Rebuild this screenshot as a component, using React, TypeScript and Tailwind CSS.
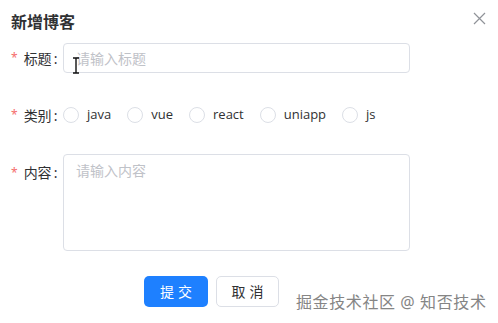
import React from 'react';

const options = ['java', 'vue', 'react', 'uniapp', 'js'];

const Label: React.FC<{ text: string }> = ({ text }) => (
  <div className="w-[52px] shrink-0 flex items-center text-[14px] text-[#303133]">
    <span className="text-[#f56c6c] text-[12px] mr-[6px]">*</span>
    <span>{text}</span>
    <span className="ml-[2px]">:</span>
  </div>
);

const App: React.FC = () => {
  return (
    <div
      className="relative w-[498px] h-[323px] bg-white overflow-hidden"
      style={{ fontFamily: '"Noto Sans", "Noto Sans CJK SC", sans-serif' }}
    >
      <div className="pl-[11px] pt-[10px] flex flex-col">
        <h1 className="text-[16px] leading-[24px] font-bold text-[#303133]">新增博客</h1>

        <div className="mt-[9px] flex items-center h-[30px]">
          <Label text="标题" />
          <div className="relative w-[347px] h-[30px] border border-[#dcdfe6] rounded-[4px] flex items-center pl-[12px] text-[14px] text-[#bfc2c8]">
            请输入标题
            <svg className="absolute left-[8px] top-[13px]" width="8" height="17" viewBox="0 0 8 17">
              <path d="M1 1h6M4 1v15M1 16h6" stroke="#111" strokeWidth="1.4" fill="none" />
            </svg>
          </div>
        </div>

        <div className="mt-[27px] flex items-center h-[30px]">
          <Label text="类别" />
          <div className="flex items-center text-[13px] text-[#303133]" style={{ fontFamily: '"Open Sans", "Noto Sans CJK SC", sans-serif' }}>
            {options.map((o) => (
              <label key={o} className="flex items-center mr-[16px]">
                <span className="w-[16px] h-[16px] rounded-full border border-[#dcdfe6] bg-white" />
                <span className="ml-[8px]">{o}</span>
              </label>
            ))}
          </div>
        </div>

        <div className="mt-[24px] flex items-start">
          <div className="pt-[8px]">
            <Label text="内容" />
          </div>
          <div className="w-[347px] h-[97px] border border-[#dcdfe6] rounded-[4px] pl-[12px] pt-[5px] text-[14px] text-[#bfc2c8]">
            请输入内容
          </div>
        </div>

        <div className="mt-[25px] flex items-center pl-[133px] gap-[8px]">
          <button className="w-[64px] h-[31px] rounded-[5px] bg-[#1e80ff] text-white text-[14px] tracking-[4px] pl-[4px]">
            提交
          </button>
          <button className="w-[63px] h-[31px] rounded-[5px] border border-[#dcdfe6] bg-white text-[#303133] text-[14px] tracking-[4px] pl-[4px]">
            取消
          </button>
        </div>
      </div>

      <svg className="absolute left-[473px] top-[12px]" width="13" height="13" viewBox="0 0 13 13">
        <path d="M1 1l11 11M12 1L1 12" stroke="#909399" strokeWidth="1.2" fill="none" />
      </svg>

      <div
        className="absolute left-[296px] top-[292px] text-[16px] leading-[20px] tracking-[0.6px] text-[#858585]"
        style={{ textShadow: '0 0 2px #fff, 0 0 2px #fff' }}
      >
        掘金技术社区 @ 知否技术
      </div>
    </div>
  );
};

export default App;
